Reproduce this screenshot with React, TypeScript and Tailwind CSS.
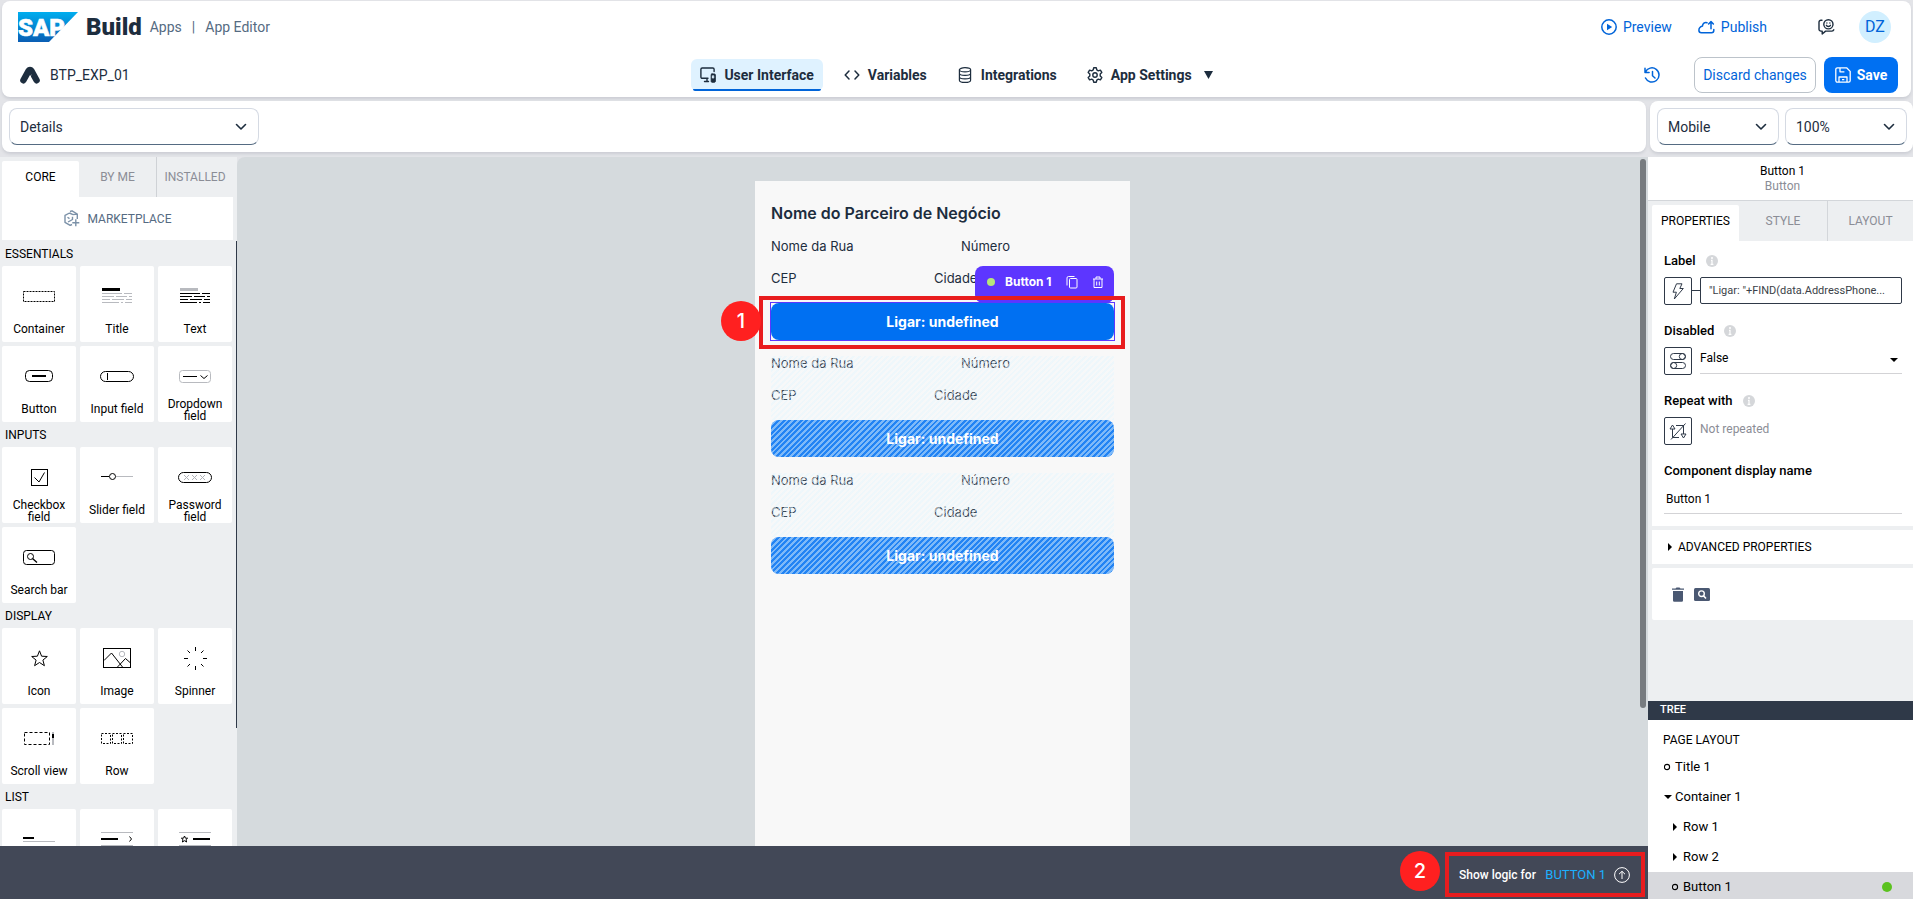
import type { ReactNode } from "react";

type IconProps = { className?: string };

const PANEL = "bg-white shadow-[0_2px_3px_rgba(85,95,110,0.16)]";

/* ---------- shell icons ---------- */

function SapLogo() {
  return (
    <svg width="60" height="30" viewBox="0 0 60 30" role="img" aria-label="SAP">
      <defs>
        <linearGradient id="sapBlue" x1="0" y1="0" x2="0" y2="1">
          <stop offset="0" stopColor="#00aeef" />
          <stop offset="1" stopColor="#0a5eb4" />
        </linearGradient>
      </defs>
      <path d="M0 0H60L31 30H0Z" fill="url(#sapBlue)" />
      <text x="0" y="24" fontSize="24" fontWeight="900" fill="#fff" stroke="#fff" strokeWidth=".6" fontFamily="Roboto, sans-serif">
        SAP
      </text>
    </svg>
  );
}

function AppMark() {
  return (
    <svg width="20" height="18" viewBox="0 0 20 18" aria-hidden="true">
      <path d="M3.400 14.300L8.600 4.900Q10 2.800 11.400 4.900L16.600 14.300" fill="none" stroke="#1d2d3e" strokeWidth="6.400" strokeLinejoin="round" strokeLinecap="round" />
      <path d="M11.400 8L6.400 18H12.800L10.600 12.500Z" fill="#fff" />
    </svg>
  );
}

function Chevron({ className }: IconProps) {
  return (
    <svg className={className} width="12" height="8" viewBox="0 0 12 8" fill="none" aria-hidden="true">
      <path d="M1.5 1.5L6 6L10.5 1.5" stroke="#1d2d3e" strokeWidth="1.6" strokeLinecap="round" strokeLinejoin="round" />
    </svg>
  );
}

function ScreensIcon() {
  return (
    <svg width="16" height="16" viewBox="0 0 16 16" fill="none" stroke="#1d2d3e" strokeWidth="1.4" strokeLinecap="round" strokeLinejoin="round" aria-hidden="true">
      <path d="M8 11.3H2.2A1.3 1.3 0 0 1 .9 10V2.3A1.3 1.3 0 0 1 2.2 1H12.8A1.3 1.3 0 0 1 14.1 2.3V4.5M4.5 14.5H8.5M7 11.5V14" />
      <rect x="11.2" y="7" width="4.1" height="8.2" rx=".8" fill="#1d2d3e" strokeWidth="1" />
      <path d="M12.8 8.8H13.7V11H12.8Z" stroke="#dff2ff" strokeWidth="1" />
    </svg>
  );
}

function CodeIcon() {
  return (
    <svg width="16" height="16" viewBox="0 0 16 16" fill="none" stroke="#1d2d3e" strokeWidth="1.5" strokeLinecap="round" strokeLinejoin="round" aria-hidden="true">
      <path d="M5 4L1.2 8L5 12M11 4L14.8 8L11 12" />
    </svg>
  );
}

function DatabaseIcon() {
  return (
    <svg width="16" height="16" viewBox="0 0 16 16" fill="none" stroke="#1d2d3e" strokeWidth="1.2" aria-hidden="true">
      <ellipse cx="8" cy="2.8" rx="5.6" ry="2.1" />
      <path d="M2.4 2.8V13.2C2.4 14.4 4.9 15.4 8 15.4S13.6 14.4 13.6 13.2V2.8M2.4 6.2C2.4 7.4 4.9 8.3 8 8.3S13.6 7.4 13.6 6.2M2.4 9.8C2.4 11 4.9 11.9 8 11.9S13.6 11 13.6 9.8" />
    </svg>
  );
}

function GearIcon() {
  return (
    <svg width="16" height="16" viewBox="0 0 16 16" fill="none" stroke="#1d2d3e" strokeWidth="1.4" strokeLinejoin="round" aria-hidden="true">
      <path d="M6.7 .8H9.3L9.8 2.9L11.3 3.8L13.4 3.1L14.8 5.4L13.2 6.9V9.1L14.8 10.6L13.4 12.9L11.3 12.2L9.8 13.1L9.3 15.2H6.7L6.2 13.1L4.7 12.2L2.6 12.9L1.2 10.6L2.8 9.1V6.9L1.2 5.4L2.6 3.1L4.7 3.8L6.2 2.9Z" />
      <circle cx="8" cy="8" r="2.2" />
    </svg>
  );
}

function PlayIcon() {
  return (
    <svg width="16" height="16" viewBox="0 0 16 16" aria-hidden="true">
      <circle cx="8" cy="8" r="7.2" fill="none" stroke="#0064d9" strokeWidth="1.5" />
      <path d="M6 4.8L11.2 8L6 11.2Z" fill="#0064d9" />
    </svg>
  );
}

function CloudUpIcon() {
  return (
    <svg width="17" height="16" viewBox="0 0 17 16" fill="none" stroke="#0064d9" strokeWidth="1.5" strokeLinecap="round" strokeLinejoin="round" aria-hidden="true">
      <path d="M9 3.7C6.6 2.9 4.6 4.7 4.5 7C2.6 7.6 .9 9 .9 11.2C.9 12.8 2 13.7 3.4 13.7H13.6C15 13.7 15.8 12.8 15.8 11.6V10.4M13 9.7V2.8M10.6 5L13 2.6L15.4 5" />
    </svg>
  );
}

function FeedbackIcon() {
  return (
    <svg width="17" height="16" viewBox="0 0 17 16" fill="none" stroke="#1d2d3e" strokeWidth="1.4" strokeLinecap="round" strokeLinejoin="round" aria-hidden="true">
      <path d="M4 1.3H3A1.9 1.9 0 0 0 1 3.2V10.2A1.9 1.9 0 0 0 3 12.1H4.2V15L7.6 12.1H14A1.9 1.9 0 0 0 15.8 10.8" />
      <circle cx="10.4" cy="5.3" r="4.6" />
      <path d="M8.3 6.3C9 7.8 11.8 7.8 12.5 6.3" />
      <path d="M8.9 3.9V4M11.9 3.9V4" />
    </svg>
  );
}

function HistoryIcon() {
  return (
    <svg width="17" height="17" viewBox="0 0 17 17" fill="none" stroke="#0064d9" strokeWidth="1.5" strokeLinecap="round" strokeLinejoin="round" aria-hidden="true">
      <path d="M1 1.3V5.4H5.1M1.4 5.2A7.1 7.1 0 1 1 1.5 11M8.5 4.6V8.7L11 11" />
    </svg>
  );
}

function SaveIcon() {
  return (
    <svg width="16" height="16" viewBox="0 0 16 16" fill="none" stroke="#fff" strokeWidth="1.3" strokeLinejoin="round" aria-hidden="true">
      <path d="M2.4 .8H11.6L15.2 4.4V13.6A1.6 1.6 0 0 1 13.6 15.2H2.4A1.6 1.6 0 0 1 .8 13.6V2.4A1.6 1.6 0 0 1 2.4 .8ZM4 15V10H12V15M5 .9V4.8H9.4M7 12.6H9.3" />
    </svg>
  );
}

function MarketplaceIcon() {
  return (
    <svg width="16" height="17" viewBox="0 0 16 17" fill="none" stroke="#7b91a8" strokeWidth="1.4" strokeLinejoin="round" aria-hidden="true">
      <path d="M5.500 3L1 5.400V12.400L6.200 15.400L8 14.500M5.500 3L9 4.600M6 1.500L8 .8L13.300 4V9M3.500 7.200L5.500 8.600M9 4.600L13.300 4M4 12L8.500 9.500V6.800M11.800 9.200V16.200M8.300 12.700H15.300" />
    </svg>
  );
}

/* ---------- palette ---------- */

const S = { fill: "none", stroke: "#000", strokeWidth: 1 } as const;

function Glyph({ w, h, children }: { w: number; h: number; children: ReactNode }) {
  return (
    <svg width={w} height={h} viewBox={`0 0 ${w} ${h}`} aria-hidden="true">
      {children}
    </svg>
  );
}

function TextLines({ head, body }: { head: string; body: string }) {
  return (
    <Glyph w={30} h={16}>
      <path d="M0 1.5H18" stroke={head} strokeWidth="3" />
      <path d="M0 5.5H20M22 5.5H30M0 8.5H12M14 8.5H25M27 8.5H30M0 11.5H8M10 11.5H22M24 11.5H30M0 14.5H17M19 14.5H21M23 14.5H30" stroke={body} />
    </Glyph>
  );
}

const glyphs: Record<string, ReactNode> = {
  Container: (
    <Glyph w={32} h={11}>
      <rect x=".5" y=".5" width="31" height="10" {...S} strokeDasharray="2 1" />
    </Glyph>
  ),
  Title: <TextLines head="#000" body="#b8babf" />,
  Text: <TextLines head="#b8babf" body="#000" />,
  Button: (
    <Glyph w={28} h={12}>
      <rect x=".5" y=".5" width="27" height="11" rx="4" {...S} />
      <path d="M7 6H21" stroke="#000" strokeWidth="2" />
    </Glyph>
  ),
  "Input field": (
    <Glyph w={34} h={11}>
      <rect x=".5" y=".5" width="33" height="10" rx="5" {...S} />
      <path d="M7.5 2V9" {...S} />
    </Glyph>
  ),
  "Dropdown field": (
    <Glyph w={32} h={13}>
      <rect x=".5" y=".5" width="31" height="12" rx="3" fill="none" stroke="#b8babf" />
      <path d="M4 6.5H18M21.5 5.5L25 8.5L28.500 5.5" {...S} />
    </Glyph>
  ),
  "Checkbox field": (
    <Glyph w={17} h={17}>
      <rect x=".5" y=".5" width="16" height="16" {...S} />
      <path d="M3.500 8.5L8 13L13.500 3.500" {...S} />
    </Glyph>
  ),
  "Slider field": (
    <Glyph w={32} h={8}>
      <path d="M0 3.500H8" {...S} />
      <path d="M15 3.500H32" fill="none" stroke="#b8babf" />
      <circle cx="11.500" cy="3.500" r="3" {...S} />
    </Glyph>
  ),
  "Password field": (
    <Glyph w={34} h={11}>
      <rect x=".5" y=".5" width="33" height="10" rx="5" {...S} />
      <path d="M6 3L11 8M11 3L6 8M14 3L19 8M19 3L14 8M22 3L27 8M27 3L22 8" stroke="#b0b2b8" />
    </Glyph>
  ),
  "Search bar": (
    <Glyph w={32} h={15}>
      <rect x=".5" y=".5" width="31" height="14" rx="3" {...S} />
      <circle cx="7.500" cy="6.500" r="3" {...S} />
      <path d="M9.500 8.500L14 12.500" {...S} strokeWidth={1.4} />
    </Glyph>
  ),
  Icon: (
    <Glyph w={17} h={17}>
      <path d="M8.500 .8L10.600 6.200L16.300 6.500L11.900 10.100L13.400 15.700L8.500 12.500L3.600 15.700L5.100 10.100L.7 6.500L6.400 6.200Z" {...S} />
    </Glyph>
  ),
  Image: (
    <Glyph w={28} h={20}>
      <rect x=".5" y=".5" width="27" height="19" {...S} />
      <path d="M1 12.500L8.500 5L19.500 19M14 19.500L22.500 10.500L27 14.500" {...S} />
      <circle cx="19" cy="6" r="2.700" fill="none" stroke="#b8babf" />
    </Glyph>
  ),
  Spinner: (
    <Glyph w={23} h={23}>
      <path d="M11.500 0V4M11.500 19V23M0 11.500H4M19 11.500H23M3.500 3.500L6 6M17 17L19.500 19.500M19.500 3.500L17 6M6 17L3.500 19.500" {...S} />
    </Glyph>
  ),
  "Scroll view": (
    <Glyph w={30} h={13}>
      <rect x=".5" y=".5" width="25" height="12" {...S} strokeDasharray="3 2" />
      <path d="M29 0V13" stroke="#b8babf" strokeWidth="2" />
      <path d="M29 2V6" stroke="#000" strokeWidth="2" />
    </Glyph>
  ),
  Row: (
    <Glyph w={32} h={11}>
      <path d="M.5 .5H9.500V10.500H.5ZM11.500 .5H20.500V10.500H11.500ZM22.500 .5H31.500V10.500H22.500Z" {...S} strokeDasharray="2 1.500" />
    </Glyph>
  ),
  "Basic list item": (
    <Glyph w={32} h={14}>
      <path d="M0 6H11" stroke="#000" strokeWidth="2" />
      <path d="M0 9.500H32" stroke="#b8babf" />
    </Glyph>
  ),
  "Large list item": (
    <Glyph w={32} h={14}>
      <path d="M0 .5H32M0 13.500H32" stroke="#b8babf" />
      <path d="M0 7H17" stroke="#000" strokeWidth="2" />
      <path d="M28.500 4.500L30.500 7L28.500 9.500" {...S} />
    </Glyph>
  ),
  "Icon list item": (
    <Glyph w={32} h={14}>
      <path d="M0 .5H32M0 13.500H32" stroke="#b8babf" />
      <path d="M14 7H31" stroke="#000" strokeWidth="2" />
      <path d="M5.500 4L6.500 6.200H8.600L7 7.700L7.600 10L5.500 8.700L3.400 10L4 7.700L2.400 6.200H4.500Z" {...S} />
    </Glyph>
  ),
};

const sections = [
  { name: "ESSENTIALS", items: ["Container", "Title", "Text", "Button", "Input field", "Dropdown field"] },
  { name: "INPUTS", items: ["Checkbox field", "Slider field", "Password field", "Search bar"] },
  { name: "DISPLAY", items: ["Icon", "Image", "Spinner", "Scroll view", "Row"] },
  { name: "LIST", items: ["Basic list item", "Large list item", "Icon list item"], bare: true },
];

function Tile({ name, bare }: { name: string; bare?: boolean }) {
  const twoLines = ["Dropdown field", "Checkbox field", "Password field"].includes(name);
  return (
    <button aria-label={name} className="flex h-[76px] flex-col items-center rounded-xs bg-white text-xs text-black">
      <span className="flex h-[60px] shrink-0 items-center justify-center">{glyphs[name]}</span>
      {!bare && <span className={twoLines ? "-mt-2 px-2 text-center leading-3" : "-mt-1 leading-3.5"}>{name}</span>}
    </button>
  );
}

function Palette() {
  return (
    <aside className="flex w-[237px] shrink-0 flex-col overflow-hidden bg-[#edeff1]">
      <div className="flex h-10 shrink-0 pl-0.5 text-xs">
        <button className="mt-1 w-[77px] rounded-t-xs bg-white pb-1 text-black">CORE</button>
        <button className="w-[78px] border-r border-[#cfd2d6] text-[#8b8d96]">BY ME</button>
        <button className="grow pr-1 text-[#8b8d96]">INSTALLED</button>
      </div>
      <button className="mr-1 mb-px ml-0.5 flex h-[43px] shrink-0 items-center justify-center gap-2 bg-white text-xs text-[#556b82]">
        <MarketplaceIcon />
        MARKETPLACE
      </button>
      <div className="relative min-h-0 grow overflow-hidden">
        {sections.map((s) => (
          <section key={s.name}>
            <h2 className="flex h-[25px] items-center pl-[5px] text-xs text-black">{s.name}</h2>
            <div className="grid grid-cols-[74px_74px_74px] gap-1 pl-0.5">
              {s.items.map((i) => (
                <Tile key={i} name={i} bare={s.bare} />
              ))}
            </div>
          </section>
        ))}
        <div className="absolute top-0 right-0 h-[487px] w-px bg-[#2f3948]" />
      </div>
    </aside>
  );
}

/* ---------- header ---------- */

function NavTab({ icon, label, active, caret }: { icon: ReactNode; label: string; active?: boolean; caret?: boolean }) {
  return (
    <button
      className={
        active
          ? "relative flex h-8 items-center gap-2 rounded-md bg-[#dff2ff] px-[9px] text-sm font-bold text-[#1d2d3e]"
          : "relative flex h-8 items-center gap-2 px-[9px] text-sm font-bold text-[#1d2d3e]"
      }
    >
      {icon}
      {label}
      {caret && (
        <svg className="ml-1" width="9" height="8" viewBox="0 0 9 8" aria-hidden="true">
          <path d="M0 0H9L4.500 8Z" fill="#1d2d3e" />
        </svg>
      )}
      {active && <span className="absolute inset-x-0.5 bottom-0 h-0.5 rounded-b bg-[#0064d9]" />}
    </button>
  );
}

function Header() {
  return (
    <header className={`mx-0.5 mt-px flex h-24 shrink-0 flex-col rounded-lg ${PANEL}`}>
      <div className="flex h-[52px] items-center justify-between pr-[20px] pl-4">
        <div className="flex items-center text-sm text-[#556b82]">
          <SapLogo />
          <span className="ml-2 text-2xl font-black text-[#1d2d3e]">Build</span>
          <a href="#apps" className="ml-2">Apps</a>
          <span className="mx-2.5">|</span>
          <a href="#editor">App Editor</a>
        </div>
        <div className="flex items-center text-sm text-[#0064d9]">
          <button className="flex items-center gap-1.5"><PlayIcon />Preview</button>
          <button className="ml-[26px] flex items-center gap-1.5"><CloudUpIcon />Publish</button>
          <button className="ml-[51px]" aria-label="Feedback"><FeedbackIcon /></button>
          <button className="ml-6 flex size-8 items-center justify-center rounded-full bg-[#d1efff] text-base">DZ</button>
        </div>
      </div>
      <div className="grid h-11 grid-cols-[1fr_auto_1fr] items-center">
        <div className="flex items-center gap-2.5 pl-[18px] text-sm text-[#1d2d3e]">
          <AppMark />
          BTP_EXP_01
        </div>
        <nav className="flex gap-3">
          <NavTab icon={<ScreensIcon />} label="User Interface" active />
          <NavTab icon={<CodeIcon />} label="Variables" />
          <NavTab icon={<DatabaseIcon />} label="Integrations" />
          <NavTab icon={<GearIcon />} label="App Settings" caret />
        </nav>
        <div className="flex items-center justify-end gap-2 pr-[13px] text-sm">
          <button className="mr-[25px]" aria-label="History"><HistoryIcon /></button>
          <button className="h-9 w-[122px] rounded-lg border border-[#bcc3ca] text-[#0064d9]">Discard changes</button>
          <button className="flex h-9 w-[74px] items-center justify-center gap-1.5 rounded-lg bg-[#0070f2] font-bold text-white">
            <SaveIcon />
            Save
          </button>
        </div>
      </div>
    </header>
  );
}

function Picker({ label, options, wide }: { label: string; options: string[]; wide?: boolean }) {
  return (
    <div className={wide ? "relative w-[250px]" : "relative min-w-0 flex-1"}>
      <select
        aria-label={label}
        className="block h-[37px] w-full appearance-none rounded-lg border border-[#d5dae3] border-b-[#556b82] bg-white px-2.5 text-sm text-[#1d2d3e]"
      >
        {options.map((o) => (
          <option key={o}>{o}</option>
        ))}
      </select>
      <Chevron className="pointer-events-none absolute top-[15px] right-3" />
    </div>
  );
}

/* ---------- canvas ---------- */

const STRIPES =
  "bg-[repeating-linear-gradient(-45deg,rgba(230,246,253,0.55)_0px,rgba(230,246,253,0.55)_2px,rgba(240,250,255,0.14)_2px,rgba(240,250,255,0.14)_4px)]";

function PartnerRecord({ ghost }: { ghost?: boolean }) {
  return (
    <div className="pb-4">
      <div className="relative h-16">
        <div className="flex h-4 items-center">
          <span className="w-[190px]">Nome da Rua</span>
          <span>Número</span>
        </div>
        <div className="mt-4 flex h-4 items-center">
          <span className="w-[163px]">CEP</span>
          <span>Cidade</span>
        </div>
        {ghost && <div className={`absolute inset-0 ${STRIPES}`} />}
      </div>
      <div className="relative">
        <button className="relative block h-[37px] w-full overflow-hidden rounded-lg bg-[#0070f2] text-sm font-bold text-white">
          {ghost && <span className={`absolute inset-0 ${STRIPES}`} />}
          <span className="relative">Ligar: undefined</span>
        </button>
        {!ghost && <Selection />}
      </div>
    </div>
  );
}

function Badge({ n, className }: { n: number; className: string }) {
  return (
    <span className={`absolute flex size-10 items-center justify-center rounded-full bg-[#ff2020] font-[Inter] text-xl font-medium text-white ${className}`}>
      {n}
    </span>
  );
}

function Selection() {
  return (
    <>
      <div className="pointer-events-none absolute -inset-px border border-[#5d36ff]" />
      <div className="absolute right-0 bottom-full flex h-[37px] w-[139px] items-center rounded-lg bg-[#5d36ff] pb-[5px] pl-3 text-xs font-bold text-white">
        <span className="size-2 rounded-full bg-[#b6e67a]" />
        <span className="ml-2.5">Button 1</span>
        <button className="ml-auto" aria-label="Duplicate">
          <svg width="12" height="13" viewBox="0 0 12 13" fill="none" stroke="#fff" aria-hidden="true">
            <rect x="3.500" y="2.500" width="7.500" height="9.500" rx="1" />
            <path d="M8.500 .5H2.500A1.500 1.500 0 0 0 1 2V9.500" />
          </svg>
        </button>
        <button className="mr-[11px] ml-[15px]" aria-label="Delete">
          <svg width="10" height="13" viewBox="0 0 10 13" fill="none" stroke="#fff" aria-hidden="true">
            <path d="M0 3H10M3 2.800V1H7V2.800M1 3V11.500H9V3M3.700 5.500V9.500M6.300 5.500V9.500" />
          </svg>
        </button>
      </div>
      <div className="pointer-events-none absolute -top-[7px] -right-[11px] -bottom-[9px] -left-3 border-4 border-[#e81c1e]" />
      <Badge n={1} className="-top-0.5 -left-[50px]" />
    </>
  );
}

function Canvas() {
  return (
    <main className="relative flex grow justify-center overflow-hidden rounded-tl-lg bg-[#d5dadd] pt-6">
      <div className="w-[375px] bg-[#f8f8f8] px-4 pt-[22px] font-[Inter] text-[13px] text-[#1d2d3e]">
        <h1 className="mb-4 h-5 text-base leading-5 font-semibold">Nome do Parceiro de Negócio</h1>
        <PartnerRecord />
        <PartnerRecord ghost />
        <PartnerRecord ghost />
      </div>
      <div className="absolute top-0.5 right-0.5 h-[549px] w-1.5 rounded-full bg-[#777b7f]" />
    </main>
  );
}

function LogicBar() {
  return (
    <footer className="flex h-[53px] shrink-0 items-center justify-end bg-[#424857] pt-1 pr-[3px]">
      <div className="relative flex h-[45px] w-[200px] items-center justify-between border-4 border-[#e81c1e] pr-[11px] pl-2.5">
        <span className="text-xs font-medium text-white">Show logic for</span>
        <button className="flex items-center gap-2 text-[13px] text-[#1bb0ff]">
          BUTTON 1
          <svg width="16" height="16" viewBox="0 0 16 16" fill="none" stroke="#fff" aria-hidden="true">
            <circle cx="8" cy="8" r="7.400" />
            <path d="M8 12V4.500M5 7.200L8 4.300L11 7.200" />
          </svg>
        </button>
        <Badge n={2} className="-top-[5px] -left-[49px]" />
      </div>
    </footer>
  );
}

/* ---------- inspector ---------- */

function Field({ id, label, info = true, children }: { id: string; label: string; info?: boolean; children: ReactNode }) {
  return (
    <div className="h-[70px]">
      <div className="flex h-5 items-center gap-2.5">
        <label htmlFor={id} className="text-[13px] font-medium text-black">{label}</label>
        {info && (
          <svg width="12" height="12" viewBox="0 0 12 12" aria-hidden="true">
            <circle cx="6" cy="6" r="6" fill="#d5d7da" />
            <path d="M5 5.300H6V9.300M4.600 9.300H7.400" stroke="#fff" strokeWidth="1.200" fill="none" />
            <circle cx="6" cy="3" r="1" fill="#fff" />
          </svg>
        )}
      </div>
      <div className="mt-1.5 flex">{children}</div>
    </div>
  );
}

function BindButton({ label, children }: { label: string; children: ReactNode }) {
  return (
    <button aria-label={label} className="flex size-7 shrink-0 items-center justify-center rounded-xs border border-[#2f3948]">
      {children}
    </button>
  );
}

function Inspector() {
  return (
    <section className="flex min-h-0 grow flex-col bg-[#edeff1]">
      <div className="flex h-[43px] shrink-0 flex-col items-center justify-center bg-white pl-1 text-xs leading-[15px]">
        <span className="text-black">Button 1</span>
        <span className="text-[#8b8d96]">Button</span>
      </div>
      <div className="flex h-[41px] shrink-0 border-t border-[#d3d6da] pl-1 text-xs text-[#8b8d96]">
        <button className="mt-1 w-[87px] rounded-t-xs bg-white pb-1 text-black">PROPERTIES</button>
        <button className="w-[89px] border-r border-[#d3d6da]">STYLE</button>
        <button className="grow">LAYOUT</button>
      </div>
      <div className="ml-1 h-[285px] shrink-0 bg-white pt-2.5 pr-[11px] pl-3">
        <Field id="label" label="Label">
          <BindButton label="Formula">
            <svg width="12" height="17" viewBox="0 0 12 17" fill="none" stroke="#2f3948" strokeLinejoin="round" aria-hidden="true">
              <path d="M4.500 .8H10L7.800 5.500H11.300L2.300 16L4.400 9.200H1Z" />
            </svg>
          </BindButton>
          <span className="mt-[13px] h-px w-2 shrink-0 bg-[#2f3948]" />
          <input
            id="label"
            readOnly
            value={'"Ligar: "+FIND(data.AddressPhone...'}
            className="h-[27px] w-0 grow rounded-xs border border-[#2f3948] px-2 text-[11px] text-[#3b3f48]"
          />
        </Field>
        <Field id="disabled" label="Disabled">
          <BindButton label="Static value">
            <svg width="16" height="16" viewBox="0 0 16 16" fill="none" stroke="#2f3948" aria-hidden="true">
              <rect x=".5" y=".5" width="15" height="6" rx="3" />
              <circle cx="12.300" cy="3.500" r="3" />
              <rect x=".5" y="9.500" width="15" height="6" rx="3" />
              <circle cx="3.700" cy="12.500" r="3" />
            </svg>
          </BindButton>
          <div className="relative ml-2 grow">
            <select id="disabled" className="block h-[27px] w-full appearance-none border-b border-[#d3d3d6] pb-1 text-xs text-black">
              <option>False</option>
            </select>
            <svg className="pointer-events-none absolute top-[11px] right-1" width="8" height="4" viewBox="0 0 8 4" aria-hidden="true">
              <path d="M0 0H8L4 4Z" />
            </svg>
          </div>
        </Field>
        <Field id="repeat" label="Repeat with">
          <BindButton label="Repeat binding">
            <svg width="18" height="17" viewBox="0 0 18 17" fill="none" stroke="#2f3948" aria-hidden="true">
              <path d="M1 6L3.500 2L6 6ZM3.500 6V14.500H10M7 2.500H14.500V11M12 11H17L14.500 15ZM16.500 .5L2 16.500" />
            </svg>
          </BindButton>
          <button id="repeat" className="ml-2 h-6 text-xs text-[#8b8d96]">Not repeated</button>
        </Field>
        <Field id="display-name" label="Component display name" info={false}>
          <input id="display-name" defaultValue="Button 1" className="h-[27px] w-full border-b border-[#d3d3d6] px-0.5 pb-0.5 text-xs text-black" />
        </Field>
      </div>
      <button className="mt-1 ml-1 flex h-[34px] shrink-0 items-center gap-1.5 bg-white pl-4 text-xs text-black">
        <svg width="4" height="8" viewBox="0 0 4 8" aria-hidden="true"><path d="M0 0L4 4L0 8Z" /></svg>
        ADVANCED PROPERTIES
      </button>
      <div className="mt-1 ml-1 flex h-[52px] shrink-0 items-center gap-2.5 rounded-l-xs bg-white pl-5">
        <button aria-label="Delete component">
          <svg width="12" height="15" viewBox="0 0 12 15" fill="#4a5872" aria-hidden="true">
            <path d="M0 1.500H3.500L4.500 .5H7.500L8.500 1.500H12V2.800H0ZM1 4H11V13.500Q11 14.800 9.700 14.800H2.300Q1 14.800 1 13.500Z" />
          </svg>
        </button>
        <button aria-label="Inspect component">
          <svg width="16" height="13" viewBox="0 0 16 13" aria-hidden="true">
            <rect width="16" height="13" rx="1.500" fill="#4a5872" />
            <circle cx="7.500" cy="5.700" r="2.800" fill="none" stroke="#fff" strokeWidth="1.400" />
            <path d="M9.500 7.800L12 10.500" stroke="#fff" strokeWidth="1.600" />
          </svg>
        </button>
      </div>
    </section>
  );
}

const tree = [
  { name: "Title 1", mark: "leaf", pad: "pl-4" },
  { name: "Container 1", mark: "open", pad: "pl-4" },
  { name: "Row 1", mark: "closed", pad: "pl-6" },
  { name: "Row 2", mark: "closed", pad: "pl-6" },
  { name: "Button 1", mark: "leaf", pad: "pl-6", selected: true },
];

function TreeMark({ kind }: { kind: string }) {
  return (
    <svg className="mr-[3px] shrink-0" width="8" height="8" viewBox="0 0 8 8" aria-hidden="true">
      {kind === "leaf" && <circle cx="3" cy="4" r="2.600" fill="none" stroke="#000" strokeWidth="1.100" />}
      {kind === "open" && <path d="M0 2H8L4 6Z" />}
      {kind === "closed" && <path d="M1 0L5 4L1 8Z" />}
    </svg>
  );
}

function Tree() {
  return (
    <section className="flex h-[198px] shrink-0 flex-col overflow-hidden bg-white">
      <h2 className="flex h-[19px] shrink-0 items-center bg-[#2f3948] pl-3 text-[11px] font-medium text-white">TREE</h2>
      <h3 className="flex h-8 shrink-0 items-end pb-1 pl-[15px] text-xs text-black">PAGE LAYOUT</h3>
      {tree.map((n) => (
        <button
          key={n.name}
          className={
            n.selected
              ? `flex h-[30px] shrink-0 items-center bg-[#d8d9dd] text-[13px] text-black ${n.pad}`
              : `flex h-[30px] shrink-0 items-center text-[13px] text-black ${n.pad}`
          }
        >
          <TreeMark kind={n.mark} />
          {n.name}
          {n.selected && <span className="mr-[21px] ml-auto size-2.5 rounded-full bg-[#5bc21f]" />}
        </button>
      ))}
    </section>
  );
}

export default function App() {
  return (
    <div className="flex h-screen flex-col overflow-hidden bg-[#e3e4e8] font-[Roboto,sans-serif]">
      <Header />
      <div className="mt-1 mb-[5px] flex shrink-0 gap-1 pl-0.5">
        <div className={`flex h-[51px] grow items-center rounded-lg px-[7px] ${PANEL}`}>
          <Picker label="Page" options={["Details"]} wide />
        </div>
        <div className={`flex h-[51px] w-[263px] items-center gap-1.5 rounded-lg pr-1.5 pl-[7px] ${PANEL}`}>
          <Picker label="Device" options={["Mobile"]} />
          <Picker label="Zoom" options={["100%"]} />
        </div>
      </div>
      <div className="flex min-h-0 grow">
        <div className="flex min-w-0 grow flex-col">
          <div className="flex min-h-0 grow">
            <Palette />
            <Canvas />
          </div>
          <LogicBar />
        </div>
        <div className="flex w-[265px] shrink-0 flex-col">
          <Inspector />
          <Tree />
        </div>
      </div>
    </div>
  );
}
